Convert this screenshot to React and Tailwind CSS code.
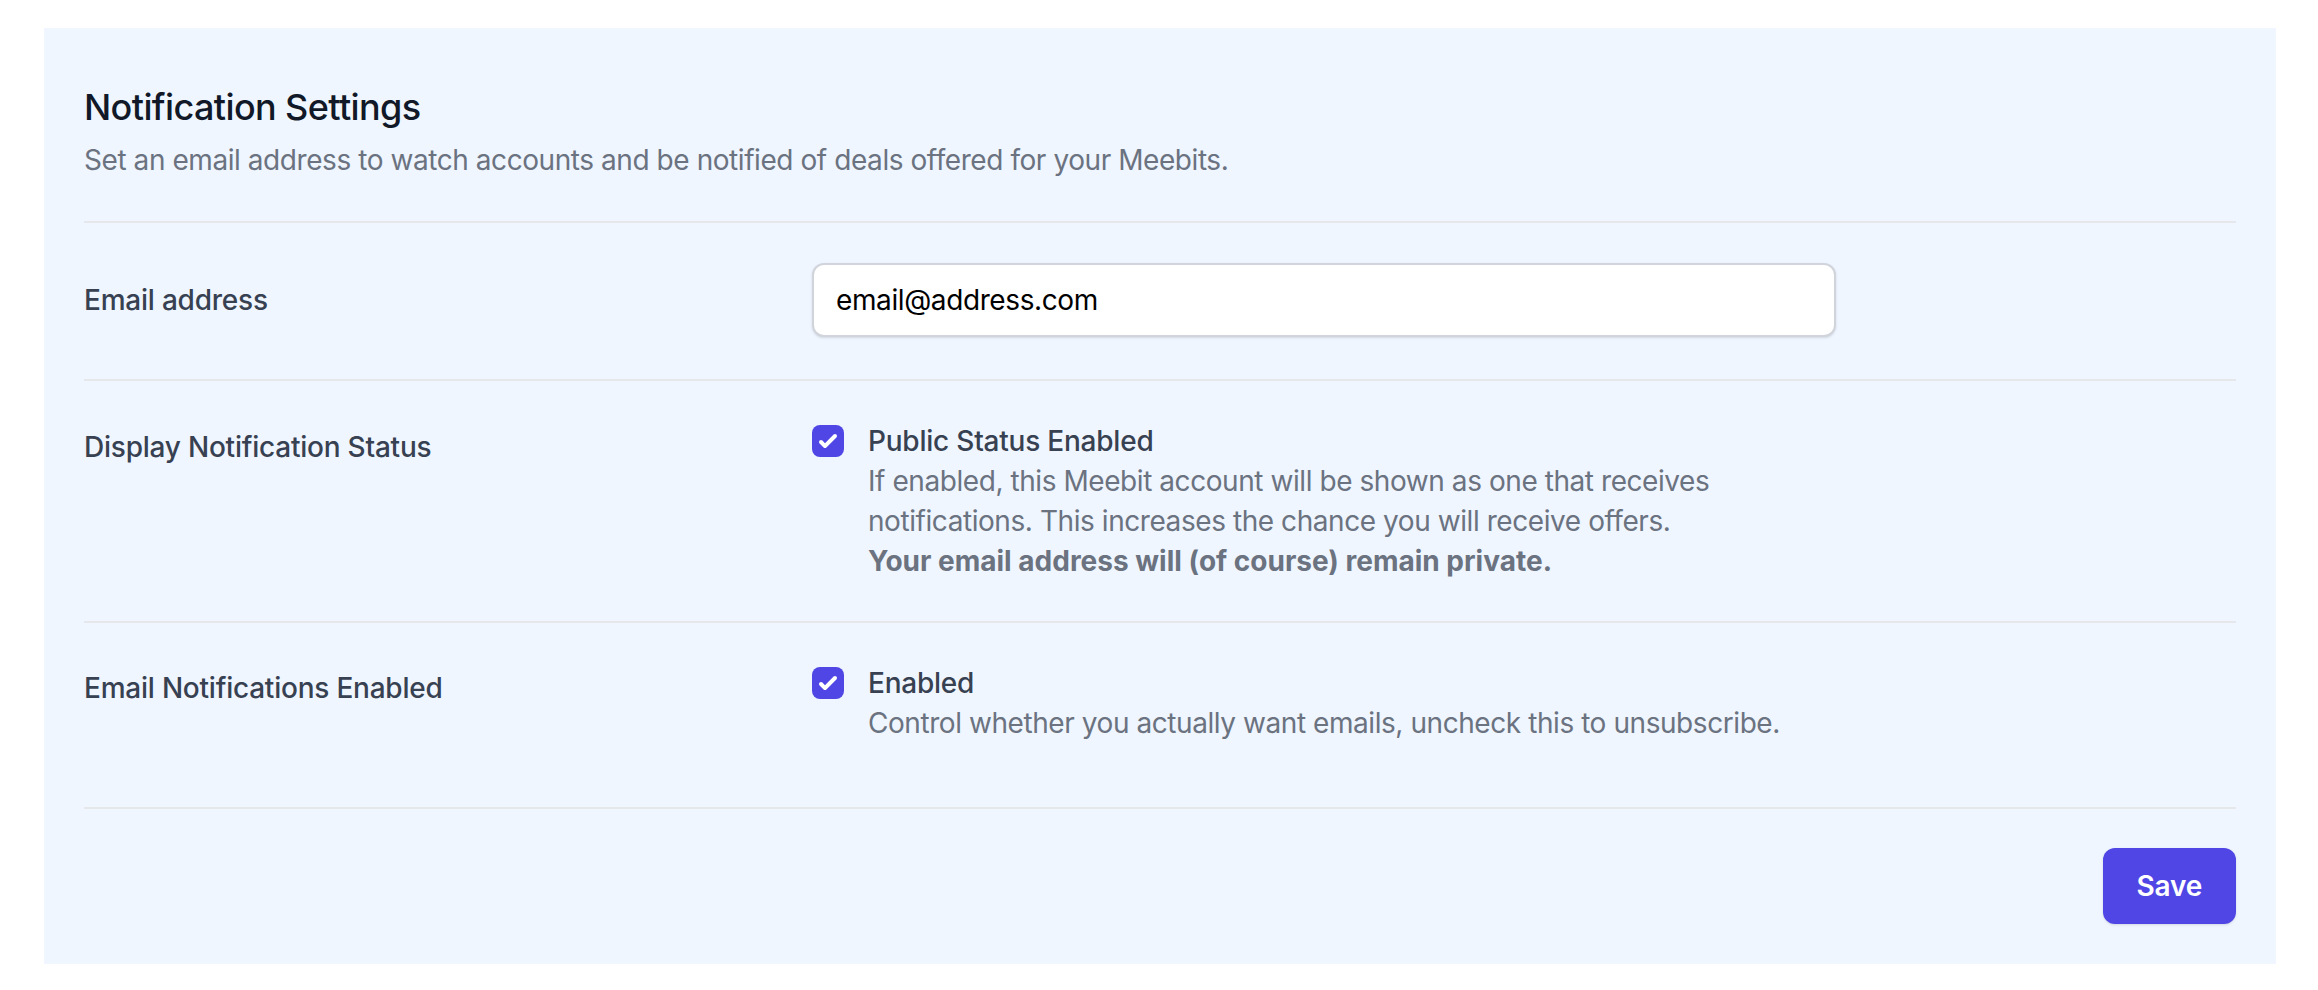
import { useState } from "react";

const CheckMark = () => (
  <svg viewBox="0 0 16 16" fill="white" className="w-[32px] h-[32px]">
    <path d="M12.207 4.793a1 1 0 010 1.414l-5 5a1 1 0 01-1.414 0l-2-2a1 1 0 011.414-1.414L6.5 9.086l4.293-4.293a1 1 0 011.414 0z" />
  </svg>
);

const Checkbox = ({ checked, onChange }) => (
  <button
    type="button"
    onClick={() => onChange(!checked)}
    className={`w-[32px] h-[32px] rounded-[8px] flex items-center justify-center ${
      checked ? "bg-[#4f46e5]" : "bg-white border-2 border-[#d1d5db]"
    }`}
  >
    {checked && <CheckMark />}
  </button>
);

const App = () => {
  const [email, setEmail] = useState("email@address.com");
  const [publicStatus, setPublicStatus] = useState(true);
  const [emailEnabled, setEmailEnabled] = useState(true);

  return (
    <div className="min-h-screen bg-white font-['Inter'] tracking-[-0.014em] pt-[28px] pl-[44px]">
      <div className="w-[2232px] bg-[#eff6ff] px-[40px] pt-[55px] pb-[40px]">
        {/* Header */}
        <div className="pb-[41px]">
          <h3 className="text-[36px] leading-[48px] font-medium text-[#111827] tracking-[-0.017em]">Notification Settings</h3>
          <p className="mt-[9px] text-[28px] leading-[40px] text-[#6b7280] tracking-[-0.0155em]">
            Set an email address to watch accounts and be notified of deals offered for your Meebits.
          </p>
        </div>

        {/* Email address */}
        <div className="grid grid-cols-3 gap-x-[32px] items-start border-t-2 border-[#e5e7eb] pt-[40px] pb-[42px]">
          <label className="pt-[17px] text-[28px] leading-[40px] font-medium text-[#374151]">Email address</label>
          <div className="col-span-2">
            <input
              type="email"
              value={email}
              onChange={(e) => setEmail(e.target.value)}
              className="w-[1024px] h-[74px] bg-white border-2 border-[#d1d5db] rounded-[12px] shadow-sm pl-[22px] pr-[22px] text-[28px] tracking-[-0.014em] text-black focus:outline-none"
            />
          </div>
        </div>

        {/* Display Notification Status */}
        <div className="grid grid-cols-3 gap-x-[32px] items-start border-t-2 border-[#e5e7eb] pt-[40px] pb-[40px]">
          <div className="pt-[6px] text-[28px] leading-[40px] font-medium text-[#374151]">Display Notification Status</div>
          <div className="col-span-2 max-w-[1024px] flex items-start">
            <div className="h-[40px] flex items-center">
              <Checkbox checked={publicStatus} onChange={setPublicStatus} />
            </div>
            <div className="ml-[24px] text-[28px] leading-[40px]">
              <p className="font-medium text-[#374151]">Public Status Enabled</p>
              <p className="text-[#6b7280] tracking-[-0.0155em]">
                If enabled, this Meebit account will be shown as one that receives notifications. This increases the chance you will receive offers.
              </p>
              <p className="font-bold text-[#6b7280] tracking-normal">Your email address will (of course) remain private.</p>
            </div>
          </div>
        </div>

        {/* Email Notifications Enabled */}
        <div className="grid grid-cols-3 gap-x-[32px] items-start border-t-2 border-[#e5e7eb] pt-[40px] pb-[64px]">
          <div className="pt-[5px] text-[28px] leading-[40px] font-medium text-[#374151]">Email Notifications Enabled</div>
          <div className="col-span-2 max-w-[1024px] flex items-start">
            <div className="h-[40px] flex items-center">
              <Checkbox checked={emailEnabled} onChange={setEmailEnabled} />
            </div>
            <div className="ml-[24px] text-[28px] leading-[40px]">
              <p className="font-medium text-[#374151]">Enabled</p>
              <p className="text-[#6b7280] tracking-[-0.0155em]">Control whether you actually want emails, uncheck this to unsubscribe.</p>
            </div>
          </div>
        </div>

        {/* Footer */}
        <div className="flex justify-end border-t-2 border-[#e5e7eb] pt-[39px]">
          <button
            type="button"
            className="h-[76px] px-[34px] rounded-[12px] bg-[#4f46e5] text-white text-[28px] font-semibold shadow-sm"
          >
            Save
          </button>
        </div>
      </div>
    </div>
  );
};

export default App;
